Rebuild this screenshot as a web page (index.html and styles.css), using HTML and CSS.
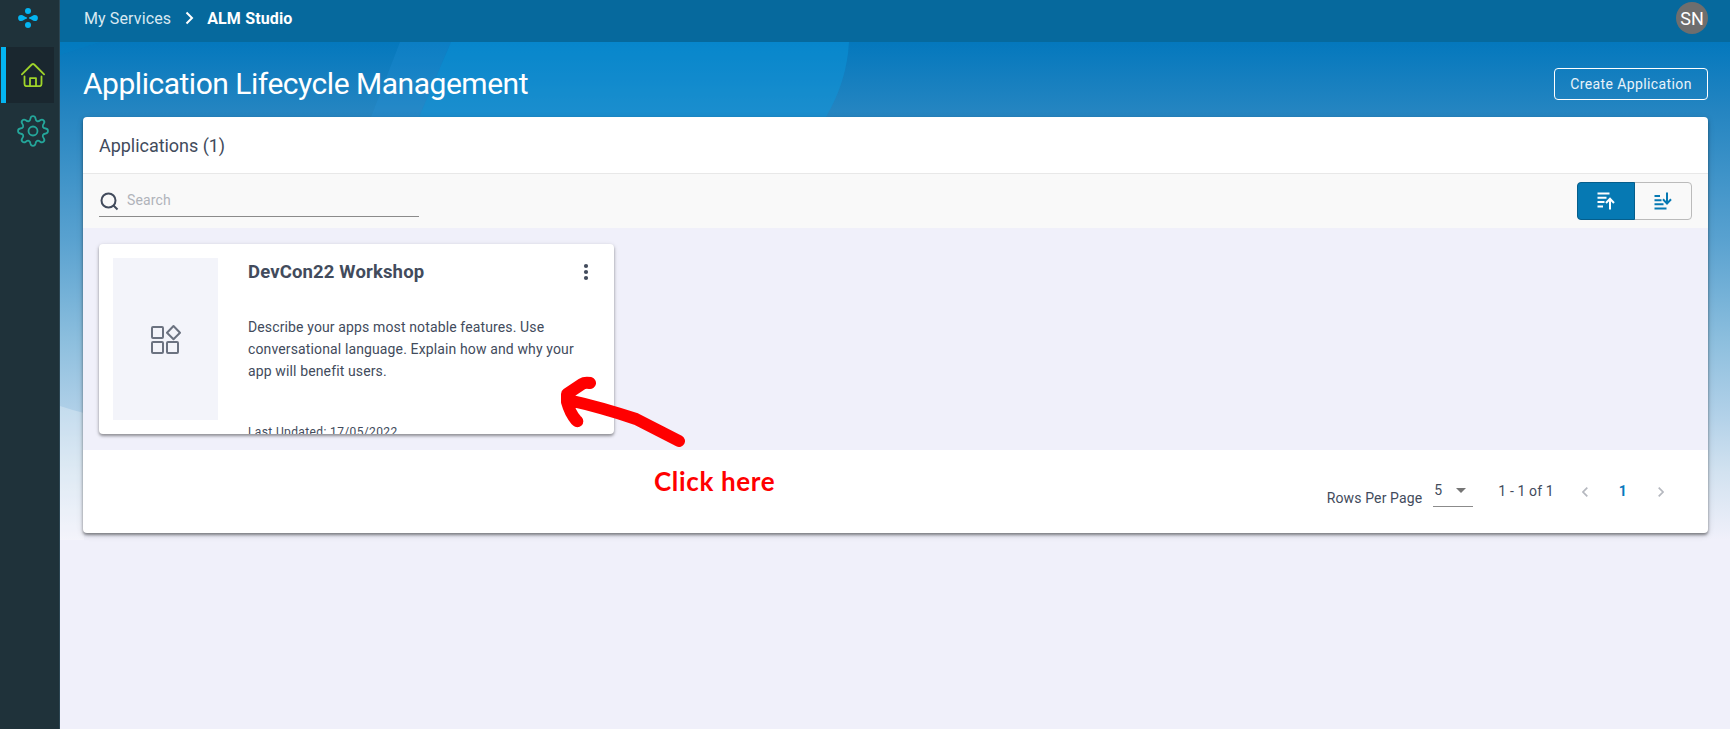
FILE: index.html
```
<!DOCTYPE html>
<html lang="en">
<head>
<meta charset="utf-8">
<title>ALM Studio</title>
<link rel="stylesheet" href="styles.css">
</head>
<body>
<div class="app">
  <nav class="sidebar">
    <a class="logo"><svg width="20" height="20" viewBox="0 0 20 20" fill="#04b5f2"><circle cx="10" cy="3" r="3"/><circle cx="10" cy="17" r="3"/><path d="M3.2 6.9C5.5 6.9 6 8.8 9 9.4v1.2C6 11.200 5.500 13.100 3.200 13.100a3.100 3.100 0 0 1 0-6.200zM16.800 6.900C14.500 6.900 14 8.800 11 9.400v1.200c3 .6 3.500 2.500 5.800 2.500a3.100 3.100 0 0 0 0-6.200z"/></svg></a>
    <a class="nav-item active"><svg width="24" height="24" viewBox="0 0 24 24" fill="none" stroke="#9fd42a" stroke-width="1.800" stroke-linecap="round" stroke-linejoin="round"><path d="M.9 11.300 10.800 1.500q1.200-1 2.400 0l9.900 9.800M3.500 13.500V21q0 2.200 2.200 2.200h12.600q2.200 0 2.200-2.200v-7.500M9 23v-7.800h6V23"/></svg></a>
    <a class="nav-item"><svg width="32" height="32" viewBox="-16 -16 32 32" fill="none" stroke="#24a69a" stroke-width="1.800" stroke-linejoin="round"><circle r="4.500"/><path d="M-2.500-12.700C-2-15.700 2-15.700 2.500-12.700C2.900-9.600 4.900-8.900 7.200-10.700C9.700-12.600 12.600-9.700 10.700-7.200C8.900-4.900 9.600-2.900 12.700-2.500C15.700-2 15.700 2 12.700 2.500C9.600 2.900 8.900 4.900 10.700 7.200C12.600 9.700 9.700 12.600 7.200 10.700C4.900 8.900 2.900 9.600 2.500 12.700C2 15.700-2 15.700-2.500 12.700C-2.900 9.600-4.900 8.900-7.200 10.700C-9.700 12.600-12.600 9.700-10.700 7.200C-8.900 4.900-9.600 2.900-12.700 2.500C-15.700 2-15.700-2-12.700-2.500C-9.600-2.900-8.900-4.900-10.700-7.200C-12.600-9.700-9.700-12.600-7.200-10.700C-4.900-8.900-2.900-9.600-2.500-12.700Z"/></svg></a>
  </nav>
  <div class="main">
    <header class="topbar">
      <span class="crumb">My Services</span>
      <svg class="sep" width="9" height="14" viewBox="0 0 9 14" fill="none" stroke="#fff" stroke-width="2"><path d="M1.500 1.500 7 7l-5.500 5.500"/></svg>
      <span class="crumb current">ALM Studio</span>
      <span class="avatar">SN</span>
    </header>
    <div class="page">
      <svg class="backdrop" width="1670" height="498" viewBox="60 42 1670 498" preserveAspectRatio="none">
        <path d="M60 42h40L60 55z" fill="#0085c8" opacity=".25"/>
        <path d="M400 42h51l-32 75h-48z" fill="#2a94e0" opacity=".22"/>
        <path d="M451 42h398q-2 39-23 75H419z" fill="#0b9ce0" opacity=".42"/>
        <path d="M60 406q12 4 24 7v127H60z" fill="#fff" opacity=".28"/>
      </svg>
      <div class="title-row">
        <h1>Application Lifecycle Management</h1>
        <button class="create">Create Application</button>
      </div>
      <section class="panel">
        <h2>Applications (1)</h2>
        <div class="toolbar">
          <div class="search"><svg width="19" height="19" viewBox="0 0 19 19" fill="none" stroke="#424b5c" stroke-width="2"><circle cx="8.500" cy="8.500" r="7"/><path d="m13.500 13.500 4 4"/></svg><span>Search</span></div>
          <div class="toggle">
            <span class="on"><svg width="18" height="18" viewBox="0 0 18 18" fill="none" stroke="#fff" stroke-width="2"><path d="M.5 1.500h12M.5 5.700h9M.5 9.900h7M.5 14.500h5.500M13 17.500V7M9 11l4-4.300 4 4.300"/></svg></span>
            <span><svg width="18" height="18" viewBox="0 0 18 18" fill="none" stroke="#0679b3" stroke-width="2"><path d="M.5 4H6M.5 8.200h7M.5 12.300h9M.5 16.500h12M13 .5v11M9 7.300l4 4.300 4-4.300"/></svg></span>
          </div>
        </div>
        <div class="cards">
          <article class="card">
            <div class="thumb"><svg width="31" height="30" viewBox="0 0 31 30" fill="none" stroke="#6b7280" stroke-width="2"><rect x="2" y="3" width="11" height="11" rx="1"/><rect x="2" y="18" width="11" height="11" rx="1"/><rect x="17" y="18" width="11" height="11" rx="1"/><path d="m23.500 2 6.500 6.700-6.500 6.600L17 8.700z" stroke-linejoin="round"/></svg></div>
            <div class="info">
              <div class="card-head"><h3>DevCon22 Workshop</h3><svg width="6" height="18" viewBox="0 0 6 18" fill="#424b5c"><circle cx="3" cy="3" r="2.100"/><circle cx="3" cy="9" r="2.100"/><circle cx="3" cy="15" r="2.100"/></svg></div>
              <p class="desc">Describe your apps most notable features. Use<br>conversational language. Explain how and why your<br>app will benefit users.</p>
              <p class="updated">Last Updated: 17/05/2022</p>
            </div>
          </article>
        </div>
        <footer class="pager">
          <span class="rpp">Rows Per Page</span>
          <span class="select">5<svg width="10" height="5" viewBox="0 0 10 5" fill="#757575"><path d="M0 0h10L5 5z"/></svg></span>
          <span class="range">1 - 1 of 1</span>
          <svg class="prev" width="6" height="10" viewBox="0 0 6 10" fill="none" stroke="#b5b8bf" stroke-width="1.700"><path d="M5.300.7 1 5l4.300 4.300"/></svg>
          <span class="num">1</span>
          <svg class="next" width="6" height="10" viewBox="0 0 6 10" fill="none" stroke="#b5b8bf" stroke-width="1.700"><path d="M.7.7 5 5 .7 9.300"/></svg>
        </footer>
      </section>
    </div>
  </div>
  <svg class="arrow" width="126" height="72" viewBox="560 376 126 72" fill="none" stroke="#f00" stroke-width="12" stroke-linecap="round" stroke-linejoin="round"><path d="M679 441 636 419 Q600 407 568 400M590 383q-5-1-8 1l-15 10v8q3 11 9 18 2 2 1 1"/></svg>
  <span class="note">Click here</span>
</div>
</body>
</html>
```
FILE: styles.css
```
* { box-sizing: border-box; }
body { margin: 0; font-family: Roboto, sans-serif; color: #424b5c; overflow: hidden; }
h1, h2, h3, p { margin: 0; font-weight: 400; }
svg { display: block; flex: none; }
.app { position: relative; display: flex; width: 1730px; height: 729px; background: #f0f0fa; }
.sidebar { width: 60px; flex: none; background: #1f323a; padding: 8px 0 0 1px; border-right: 1px solid #2c4653; }
.logo { display: block; padding-left: 17px; height: 39px; }
.nav-item { display: flex; align-items: center; justify-content: center; width: 53px; height: 56px; padding-left: 11px; }
.nav-item.active { background: #1a272f; border-left: 5px solid #04b5f2; padding-left: 6px; }
.main { flex: 1; display: flex; flex-direction: column; }
.topbar { height: 42px; flex: none; display: flex; align-items: center; padding: 0 22px 6px 24px; background: #06699d; color: #fff; font-size: 16px; letter-spacing: .12px; }
.crumb { color: #d8e8f1; }
.sep { margin: 0 13px 0 14px; }
.current { color: #fff; font-weight: 700; letter-spacing: .15px; }
.avatar { width: 32px; height: 32px; border-radius: 50%; background: #6e6e6e; margin-left: auto; display: flex; align-items: center; justify-content: center; font-size: 18px; letter-spacing: 0; }
.page { position: relative; flex: 1; padding: 0 22px 0 23px; background: linear-gradient(#0478bd 0, #2585c1 70px, #5aa2d0 200px, #8dbfde 300px, #b0d0e8 370px, #d2e2f0 430px, #f0f0fa 498px); }
.backdrop { position: absolute; left: 0; top: 0; }
.title-row { position: relative; display: flex; align-items: center; justify-content: space-between; height: 75px; padding-top: 9px; }
h1 { font-size: 30px; line-height: 36px; color: #fff; letter-spacing: -.48px; }
.create { width: 154px; height: 32px; border: 1px solid #fff; border-radius: 4px; background: transparent; color: #e9f3fa; font: 14px Roboto, sans-serif; letter-spacing: .4px; padding: 0 0 1px; }
.panel { position: relative; height: 416px; background: #fff; border-radius: 4px; box-shadow: 0 2px 3px rgba(0,0,0,.42), 0 2px 7px rgba(0,0,0,.14); display: flex; flex-direction: column; }
h2 { height: 57px; flex: none; padding-left: 16px; border-bottom: 1px solid #e8e8e8; font-size: 18px; line-height: 58px; letter-spacing: -.04px; }
.toolbar { height: 54px; flex: none; display: flex; justify-content: space-between; background: #f9f9f9; padding: 8px 16px 0; }
.search { width: 320px; height: 35px; border-bottom: 1px solid #8b8b8b; display: flex; align-items: center; gap: 8px; padding-left: 1px; color: #b0b3ba; font-size: 14px; letter-spacing: .12px; }
.search svg { margin-top: 4px; }
.search span { padding-top: 2px; }
.toggle { width: 115px; height: 38px; display: flex; border: 1px solid #bbb; border-radius: 4px; }
.toggle span { flex: 1; display: flex; align-items: center; justify-content: center; }
.toggle .on { flex: none; width: 58px; margin: -1px 0 -1px -1px; background: #0679b3; border: 1px solid #055e8c; border-radius: 4px 0 0 4px; }
.cards { height: 222px; flex: none; background: #f0f0fa; padding: 16px; }
.card { width: 515px; height: 190px; background: #fff; border-radius: 4px; overflow: hidden; padding: 14px; display: flex; gap: 30px; box-shadow: 0 2px 3px rgba(0,0,0,.35), 0 1px 5px rgba(0,0,0,.12); }
.thumb { width: 105px; height: 162px; flex: none; background: #f3f4fa; display: flex; align-items: center; justify-content: center; padding-right: 1px; }
.info { flex: 1; }
.card-head { display: flex; justify-content: space-between; align-items: center; height: 28px; padding-right: 11px; }
h3 { font-size: 18.5px; font-weight: 700; letter-spacing: .15px; }
.desc { margin-top: 30px; font-size: 14px; line-height: 22px; letter-spacing: .13px; white-space: nowrap; }
.updated { margin-top: 40px; font-size: 12px; line-height: 20px; letter-spacing: .37px; }
.pager { height: 83px; display: flex; align-items: flex-start; padding-right: 44px; justify-content: flex-end; font-size: 14px; line-height: 20px; letter-spacing: .13px; }
.rpp { margin: 38px 11px 0 0; }
.select { width: 40px; height: 27px; margin-top: 30px; padding: 0 7px 6px 1px; border-bottom: 1px solid #8b8b8b; display: flex; align-items: center; justify-content: space-between; }
.range { margin: 31px 28px 0 25px; }
.prev, .next { margin-top: 37px; }
.num { margin: 31px 31px 0; color: #0679bd; font-weight: 700; }
.arrow { position: absolute; left: 560px; top: 376px; }
.note { position: absolute; left: 654px; top: 464px; color: #f00; font: 700 26px/34px Lato, sans-serif; white-space: nowrap; letter-spacing: .65px; }
```
